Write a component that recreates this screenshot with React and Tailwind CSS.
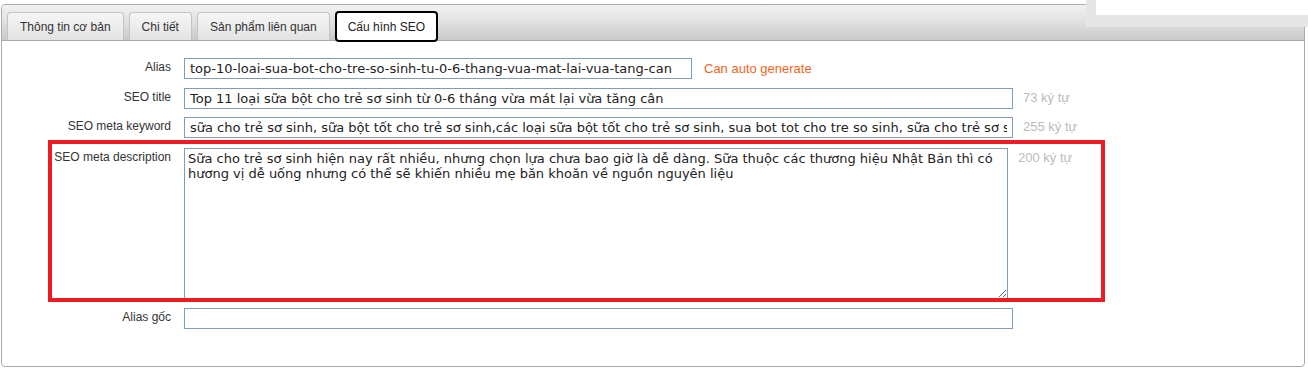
import React from 'react';

const tabs = ['Thông tin cơ bản', 'Chi tiết', 'Sản phẩm liên quan', 'Cấu hình SEO'];

const inputCls =
  'h-[21px] border border-[#7f9db9] bg-white px-[5px] text-[13px] text-[#222] outline-none font-["DejaVu_Sans",Verdana,sans-serif]';

const Row = ({ label, children, className = '' }) => (
  <div className={`flex items-start ${className}`}>
    <label className="w-[169px] shrink-0 pt-0 text-right text-[12px] text-[#333]">{label}</label>
    <div className="ml-[13px] flex items-start">{children}</div>
  </div>
);

const Counter = ({ children, className = '' }) => (
  <span className={`text-[13px] text-[#bbbbbb] ${className}`}>{children}</span>
);

export default function App() {
  return (
    <div className="relative h-[368px] w-[1308px] overflow-hidden bg-white font-['Liberation_Sans',Arial,sans-serif]">
      {/* main panel */}
      <div className="absolute left-[1px] right-[3px] top-[4px] bottom-[1px] rounded-[4px] border border-[#aaaaaa] bg-white">
        {/* tab header */}
        <div className="flex h-[36px] items-end gap-[5px] rounded-t-[4px] border-b border-[#aaaaaa] bg-gradient-to-b from-[#f2f2f2] via-[#e0e0e0] to-[#c9c9c9] pl-[5px]">
          {tabs.map((t, i) =>
            i === 3 ? (
              <div
                key={t}
                className="mb-[-2px] flex h-[31px] items-center rounded-[4px] border-2 border-black bg-white px-[11px] text-[12px] text-[#222]"
              >
                {t}
              </div>
            ) : (
              <div
                key={t}
                className="flex h-[28px] items-center rounded-t-[4px] border border-b-0 border-[#c4c4c4] bg-gradient-to-b from-[#f6f6f6] to-[#e3e3e3] px-[12px] text-[12px] text-[#333]"
              >
                {t}
              </div>
            )
          )}
        </div>

        {/* form */}
        <div className="relative pt-[17px]">
          <Row label="Alias">
            <input
              className={`${inputCls} w-[508px]`}
              defaultValue="top-10-loai-sua-bot-cho-tre-so-sinh-tu-0-6-thang-vua-mat-lai-vua-tang-can"
            />
            <span className="ml-[12px] pt-[1px] text-[13px] text-[#f26522]">Can auto generate</span>
          </Row>
          <Row label="SEO title" className="mt-[9px]">
            <input
              className={`${inputCls} w-[829px]`}
              defaultValue="Top 11 loại sữa bột cho trẻ sơ sinh từ 0-6 tháng vừa mát lại vừa tăng cân"
            />
            <Counter className="ml-[10px]">73 ký tự</Counter>
          </Row>
          <Row label="SEO meta keyword" className="mt-[8px]">
            <input
              className={`${inputCls} w-[829px]`}
              defaultValue="sữa cho trẻ sơ sinh, sữa bột tốt cho trẻ sơ sinh,các loại sữa bột tốt cho trẻ sơ sinh, sua bot tot cho tre so sinh, sữa cho trẻ sơ sinh tốt nhất"
            />
            <Counter className="ml-[10px]">255 ký tự</Counter>
          </Row>
          <Row label="SEO meta description" className="mt-[10px]">
            <textarea
              className="h-[151px] w-[824px] border border-[#7f9db9] bg-white px-[3px] pt-[2px] text-[13px] leading-[15px] text-[#222] outline-none font-['DejaVu_Sans',Verdana,sans-serif]"
              defaultValue="Sữa cho trẻ sơ sinh hiện nay rất nhiều, nhưng chọn lựa chưa bao giờ là dễ dàng. Sữa thuộc các thương hiệu Nhật Bản thì có hương vị dễ uống nhưng có thể sẽ khiến nhiều mẹ băn khoăn về nguồn nguyên liệu"
            />
            <Counter className="ml-[10px]">200 ký tự</Counter>
          </Row>
          <Row label="Alias gốc" className="mt-[9px]">
            <input className={`${inputCls} w-[829px]`} defaultValue="" />
          </Row>

          {/* red highlight annotation */}
          <div className="pointer-events-none absolute left-[46px] top-[99px] h-[162px] w-[1057px] border-4 border-[#ed1c24]" />
        </div>
      </div>

      {/* floating box top right */}
      <div className="absolute right-0 top-0 h-[27px] w-[222px] bg-[#e6e6e6] pl-[10px] pb-[12px]">
        <div className="h-[15px] bg-white" />
      </div>
    </div>
  );
}
